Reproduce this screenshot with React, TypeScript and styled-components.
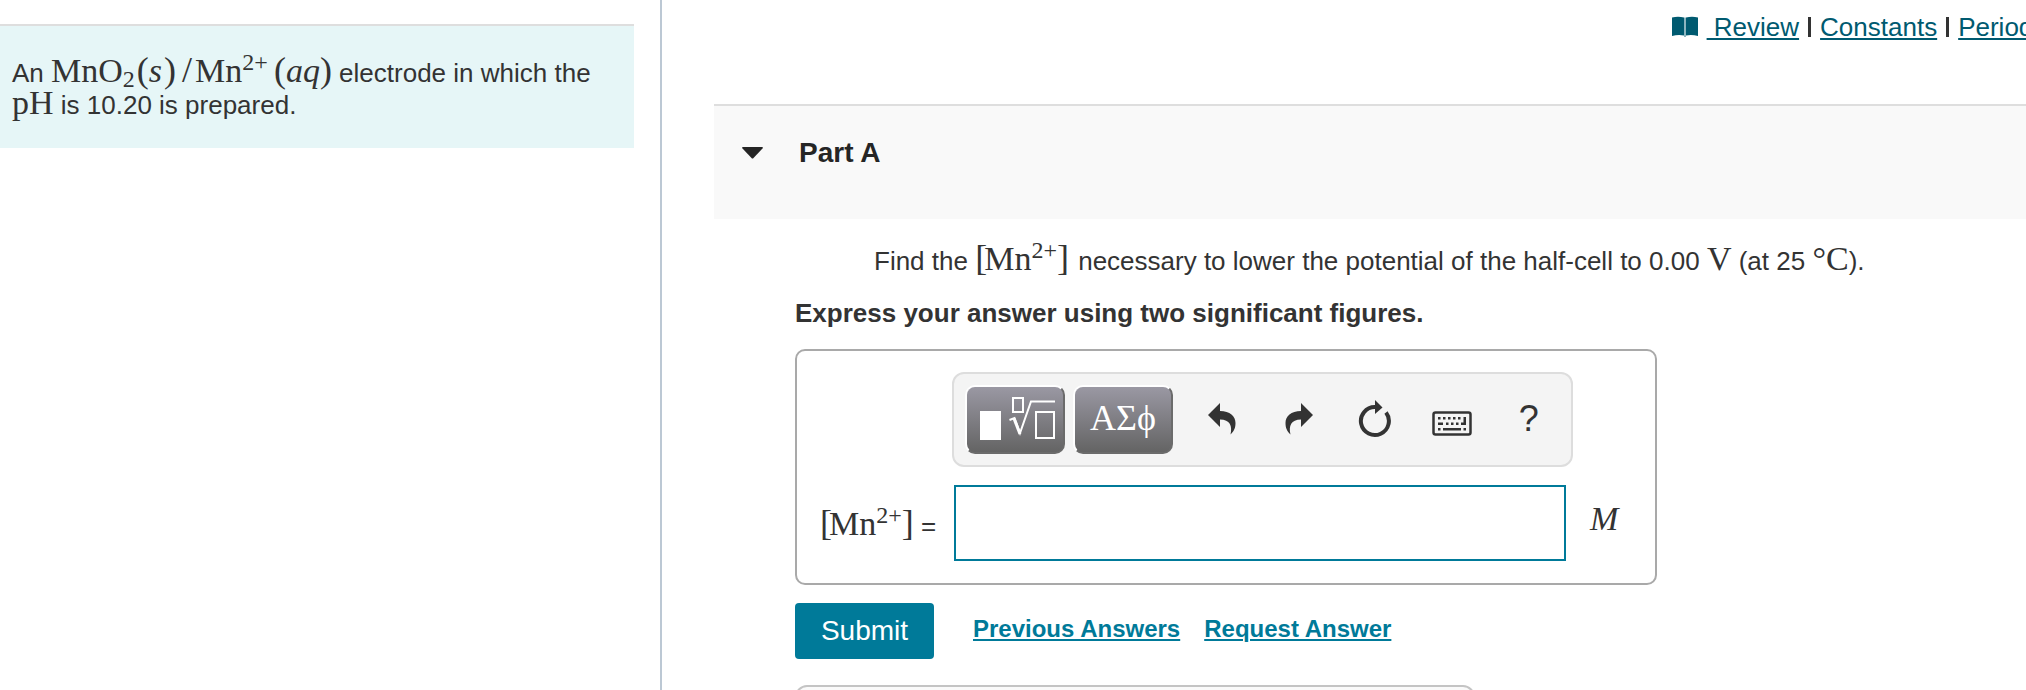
import React from "react";
import styled, { createGlobalStyle } from "styled-components";

const sans = '"Liberation Sans", Arial, sans-serif';
const serif = '"Liberation Serif", "Times New Roman", serif';

const GlobalStyle = createGlobalStyle`
  *, *::before, *::after { box-sizing: border-box; }
  body {
    margin: 0;
    background: #fff;
    color: #333;
    font-family: ${sans};
    font-size: 26px;
    line-height: 32px;
  }
  p, h2 { margin: 0; }
`;

const Page = styled.div`
  display: flex;
  min-height: 100vh;
  overflow: hidden;
`;

const Sidebar = styled.aside`
  flex: 0 0 662px;
  padding: 24px 26px 0 0;
  border-right: 2px solid #bcc8d4;
`;

const Introduction = styled.p`
  padding: 31px 12px 27px;
  border-top: 2px solid #dedede;
  background: #e6f6f7;
`;

const Main = styled.main`
  flex: 1;
  min-width: 0;
  padding-left: 52px;
`;

const ResourceNav = styled.nav`
  display: flex;
  justify-content: flex-end;
  align-items: center;
  gap: 9px;
  margin: 11px -95px 61px 0;
  white-space: pre;
`;

const ResourceLink = styled.a`
  color: #005a70;
  text-decoration: underline;
  text-decoration-thickness: 2px;
  text-underline-offset: 2px;
`;

const Divider = styled.span`
  width: 3px;
  height: 20px;
  background: #333;
`;

const PartHeader = styled.header`
  display: flex;
  align-items: center;
  gap: 36px;
  padding: 31px 28px 50px;
  border-top: 2px solid #dedede;
  background: #f9f9f9;
`;

const CollapseButton = styled.button`
  display: flex;
  padding: 0;
  border: 0;
  background: none;
`;

const PartTitle = styled.h2`
  color: #252525;
  font-size: 28px;
  line-height: 32px;
`;

const PartBody = styled.form`
  padding: 26px 28px 0 81px;
`;

const Question = styled.p`
  margin-bottom: 20px;
  padding-left: 79px;
`;

const Instruction = styled.p`
  margin-bottom: 20px;
  font-weight: bold;
`;

const MathText = styled.span<{ $italic?: boolean }>`
  font-family: ${serif};
  font-size: 34px;
  font-style: ${(p) => (p.$italic ? "italic" : "normal")};
  line-height: 0;
  white-space: nowrap;
`;

const Sup = styled.sup`
  font-size: 24px;
  line-height: 0;
  vertical-align: 12px;
`;

const Sub = styled.sub`
  font-size: 24px;
  line-height: 0;
  vertical-align: -5px;
`;

const Fence = styled.span<{ $before?: number; $after?: number }>`
  margin: 0 ${(p) => p.$after ?? 0}px 0 ${(p) => p.$before ?? 0}px;
  font-size: 36px;
  font-style: normal;
`;

const AnswerBox = styled.div`
  display: flex;
  flex-direction: column;
  gap: 18px;
  width: 100%;
  max-width: 862px;
  margin-bottom: 18px;
  padding: 21px 33px 22px 23px;
  border: 2px solid #a9a9a9;
  border-radius: 10px;
`;

const Toolbar = styled.div`
  display: flex;
  align-items: center;
  gap: 8px;
  height: 95px;
  margin: 0 49px 0 132px;
  padding: 0 4px 0 11px;
  border: 2px solid #ddd;
  border-radius: 12px;
  background: #f4f4f4;
`;

const PaletteButton = styled.button`
  display: flex;
  align-items: center;
  justify-content: center;
  width: 100px;
  height: 69px;
  padding: 0;
  border: 2px solid;
  border-color: #fff #6b6b6b #6b6b6b #fff;
  border-radius: 10px;
  background: linear-gradient(#9a98a3, #646464);
  color: #fff;
  font-family: ${serif};
  font-size: 36px;
  line-height: 40px;
`;

const PaletteText = styled.span`
  padding-bottom: 4px;
`;

const IconGroup = styled.div`
  display: flex;
  flex: 1;
  padding: 0 0 2px 3px;
`;

const IconButton = styled.button`
  display: flex;
  flex: 1;
  align-items: center;
  justify-content: center;
  height: 60px;
  padding: 0;
  border: 0;
  background: none;
  color: #333;
  font-family: ${sans};
  font-size: 36px;
`;

const AnswerRow = styled.div`
  display: flex;
  align-items: center;
`;

const AnswerLabel = styled.label`
  flex: 0 0 134px;
  padding-top: 5px;
  white-space: nowrap;
`;

const AnswerInput = styled.input`
  flex: 1;
  min-width: 0;
  height: 76px;
  margin-right: 24px;
  padding: 0 12px;
  border: 2px solid #007a99;
  background: #fff;
  color: #333;
  font: 34px ${serif};
`;

const Unit = styled.span`
  flex: 0 0 32px;
  padding-bottom: 5px;
`;

const Actions = styled.div`
  display: flex;
  align-items: center;
  gap: 24px;
  margin-bottom: 26px;
`;

const SubmitButton = styled.button`
  width: 139px;
  height: 56px;
  margin-right: 15px;
  padding: 0;
  border: 0;
  border-radius: 4px;
  background: #007a99;
  color: #fff;
  font-family: ${sans};
  font-size: 28px;
`;

const ActionLink = styled.a`
  padding-bottom: 5px;
  color: #007a99;
  font-size: 24px;
  font-weight: bold;
  text-decoration: underline;
  text-decoration-thickness: 2px;
  text-underline-offset: 2px;
`;

const FeedbackBox = styled.section`
  width: 100%;
  max-width: 680px;
  height: 120px;
  margin-bottom: -115px;
  border: 2px solid #c4c4c4;
  border-radius: 12px;
  background: #fafafa;
`;

const BookIcon = () => (
  <svg width="26" height="22" viewBox="0 0 26 22" fill="#005a70" aria-hidden="true">
    <path d="M0 1.500Q6 0 12 1.500V19.500Q6 18.500 0 20Z" />
    <path d="M14 1.500Q20 0 26 1.500V20Q20 18.500 14 19.500Z" />
    <path d="M12 1.500h2V21h-2z" opacity=".45" />
  </svg>
);

const TemplateIcon = () => (
  <svg width="96" height="65" viewBox="1 1 96 65" fill="none" stroke="#fff" strokeWidth="2" aria-hidden="true">
    <path d="M14 25h21v29H14z" fill="#fff" stroke="none" />
    <path d="M47 12h10v14H47z" />
    <path d="M43.500 34l5-2 5.500 15L65 15.500h24" />
    <path d="M48 32.500L54 48" strokeWidth="3" />
    <path d="M70 26h18v26H70z" />
  </svg>
);

const UndoIcon = ({ flipped = false }: { flipped?: boolean }) => (
  <svg width="28" height="32" viewBox="0 0 28 32" fill="currentColor" aria-hidden="true">
    <path
      transform={flipped ? "matrix(-1 0 0 1 28 0)" : undefined}
      d="M0 12L12 0V8C22 8 27.500 13 27.500 20C27.500 25 26 28 22.500 31.500C24.500 23 22 16.500 12 16.500V24Z"
    />
  </svg>
);

const ResetIcon = () => (
  <svg width="34" height="38" viewBox="0 0 34 38" aria-hidden="true">
    <path d="M17 7A14 14 0 1 0 28 12.500" fill="none" stroke="currentColor" strokeWidth="4" />
    <path d="M17 0L24.500 7.500L17 14Z" fill="currentColor" />
  </svg>
);

const KeyboardIcon = () => (
  <svg width="40" height="38" viewBox="0 0 40 38" aria-hidden="true">
    <rect x="1.500" y="12.500" width="37" height="22" rx="2" fill="none" stroke="currentColor" strokeWidth="2.500" />
    <path
      fill="currentColor"
      d="M6 17h2.500v2.500H6zM11 17h2.500v2.500H11zM16 17h2.500v2.500H16zM21 17h2.500v2.500H21zM26 17h2.500v2.500H26zM31.500 17H34v8h-5v-2.500h2.500zM6 22.500h5V25H6zM14 22.500h2.500V25H14zM19 22.500h2.500V25H19zM24 22.500h2.500V25H24zM6 28h2.500v2.500H6zM11 28h18v2.500H11zM31.500 28H34v2.500h-2.500z"
    />
  </svg>
);

const ManganeseConcentration = ({ trailing = 0 }: { trailing?: number }) => (
  <MathText>
    <Fence $after={-3}>[</Fence>Mn<Sup>2+</Sup>
    <Fence $after={trailing}>]</Fence>
  </MathText>
);

export default function App() {
  return (
    <>
      <GlobalStyle />
      <Page>
        <Sidebar>
          <Introduction>
            An{" "}
            <MathText>
              MnO<Sub>2</Sub>
              <Fence $before={2}>(</Fence>
              <MathText $italic>s</MathText>
              <Fence $before={2} $after={6}>)</Fence>
              <Fence $after={3}>/</Fence>Mn<Sup>2+</Sup>
              <Fence $before={6}>(</Fence>
              <MathText $italic>aq</MathText>
              <Fence>)</Fence>
            </MathText>{" "}
            electrode in which the <MathText>pH</MathText> is 10.20 is prepared.
          </Introduction>
        </Sidebar>
        <Main>
          <ResourceNav aria-label="Resources">
            <BookIcon />
            <ResourceLink href="#review"> Review</ResourceLink>
            <Divider />
            <ResourceLink href="#constants">Constants</ResourceLink>
            <Divider />
            <ResourceLink href="#periodic-table">Periodic Table</ResourceLink>
          </ResourceNav>
          <PartHeader>
            <CollapseButton type="button" aria-label="Collapse Part A">
              <svg width="21" height="12" viewBox="0 0 21 12" fill="#252525" aria-hidden="true">
                <path d="M1 0H20Q21.500 0 20.500 1.500L11.500 11Q10.500 12 9.500 11L.5 1.500Q-.5 0 1 0Z" />
              </svg>
            </CollapseButton>
            <PartTitle>Part A</PartTitle>
          </PartHeader>
          <PartBody onSubmit={(e) => e.preventDefault()}>
            <Question>
              Find the <ManganeseConcentration trailing={2} /> necessary to lower the potential of the half-cell to 0.00{" "}
              <MathText>V</MathText> (at 25 <MathText>°C</MathText>).
            </Question>
            <Instruction>Express your answer using two significant figures.</Instruction>
            <AnswerBox>
              <Toolbar role="toolbar" aria-label="Equation editor">
                <PaletteButton type="button" aria-label="Templates">
                  <TemplateIcon />
                </PaletteButton>
                <PaletteButton type="button">
                  <PaletteText>ΑΣϕ</PaletteText>
                </PaletteButton>
                <IconGroup>
                  <IconButton type="button" aria-label="Undo"><UndoIcon /></IconButton>
                  <IconButton type="button" aria-label="Redo"><UndoIcon flipped /></IconButton>
                  <IconButton type="button" aria-label="Reset"><ResetIcon /></IconButton>
                  <IconButton type="button" aria-label="Keyboard shortcuts"><KeyboardIcon /></IconButton>
                  <IconButton type="button">?</IconButton>
                </IconGroup>
              </Toolbar>
              <AnswerRow>
                <AnswerLabel htmlFor="answer">
                  <ManganeseConcentration /> =
                </AnswerLabel>
                <AnswerInput id="answer" type="text" />
                <Unit>
                  <MathText $italic>M</MathText>
                </Unit>
              </AnswerRow>
            </AnswerBox>
            <Actions>
              <SubmitButton type="submit">Submit</SubmitButton>
              <ActionLink href="#previous">Previous Answers</ActionLink>
              <ActionLink href="#request">Request Answer</ActionLink>
            </Actions>
            <FeedbackBox />
          </PartBody>
        </Main>
      </Page>
    </>
  );
}
